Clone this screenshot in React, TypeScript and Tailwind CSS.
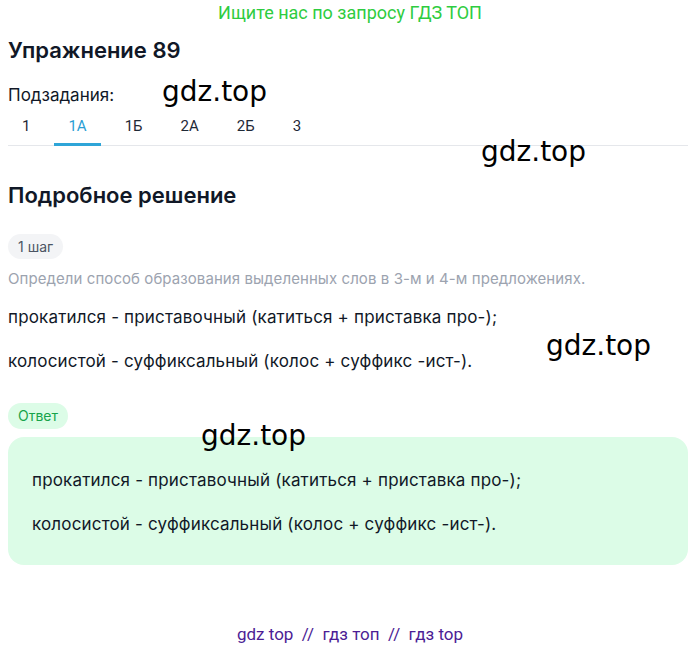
export default function App() {
  const tabs = ["1", "1А", "1Б", "2А", "2Б", "3"];
  return (
    <div className="relative w-[700px] h-[650px] bg-white font-['Inter',sans-serif] text-[#111827]">
      <p className="pt-[2px] text-center text-[18px] leading-[22px] text-[#2ecc40] font-['Roboto',sans-serif]">
        Ищите нас по запросу ГДЗ ТОП
      </p>
      <div className="pl-[8px] pr-[12px]">
        <h1 className="mt-[12px] text-[22px] font-semibold leading-[28px]">Упражнение 89</h1>
        <p className="mt-[20px] text-[17px] leading-[22px]">Подзадания:</p>
        <div className="mt-[6px] flex gap-[10px] border-b border-[#e5e7eb]">
          {tabs.map((t, i) => (
            <div
              key={t}
              className={
                "px-[14px] pt-[4px] pb-[7px] text-center text-[15px] leading-[20px] font-['Roboto',sans-serif] -mb-[1px] border-b-[3px] " +
                (i === 1 ? "text-[#2b9ed4] border-[#2ea5d8]" : "text-[#1f2937] border-transparent")
              }
            >
              {t}
            </div>
          ))}
        </div>
        <h2 className="mt-[35px] text-[22px] font-semibold leading-[28px]">Подробное решение</h2>
        <div className="mt-[25px] w-fit rounded-full bg-[#f3f4f6] px-[10px] py-[3px] text-[14px] leading-[19px] text-[#4b5563]">
          1 шаг
        </div>
        <p className="mt-[9px] text-[15px] leading-[22px] tracking-[0.005em] text-[#9ca3af]">
          Определи способ образования выделенных слов в 3-м и 4-м предложениях.
        </p>
        <p className="mt-[15px] text-[17px] leading-[24px] tracking-[0.01em]">прокатился - приставочный (катиться + приставка про-);</p>
        <p className="mt-[20px] text-[17px] leading-[24px] tracking-[0.01em]">колосистой - суффиксальный (колос + суффикс -ист-).</p>
        <div className="mt-[30px] w-fit rounded-full bg-[#dcfce7] px-[10px] py-[3px] text-[14px] leading-[20px] text-[#16a34a]">
          Ответ
        </div>
        <div className="mt-[8px] rounded-[16px] bg-[#dcfce7] px-[24px] pt-[31px] pb-[29px] text-[17px] leading-[24px] tracking-[0.01em]">
          <p>прокатился - приставочный (катиться + приставка про-);</p>
          <p className="mt-[20px]">колосистой - суффиксальный (колос + суффикс -ист-).</p>
        </div>
      </div>
      <p className="mt-[58px] text-center text-[17px] leading-[22px] text-[#4c1d95] font-['Roboto',sans-serif]">
        gdz top&nbsp; //&nbsp; гдз топ&nbsp; //&nbsp; гдз top
      </p>
      <span className="absolute left-[162px] top-[78px] text-[28px] leading-none font-['DejaVu_Sans',sans-serif] text-black">gdz.top</span>
      <span className="absolute left-[481px] top-[138px] text-[28px] leading-none font-['DejaVu_Sans',sans-serif] text-black">gdz.top</span>
      <span className="absolute left-[546px] top-[332px] text-[28px] leading-none font-['DejaVu_Sans',sans-serif] text-black">gdz.top</span>
      <span className="absolute left-[201px] top-[422px] text-[28px] leading-none font-['DejaVu_Sans',sans-serif] text-black">gdz.top</span>
    </div>
  );
}
